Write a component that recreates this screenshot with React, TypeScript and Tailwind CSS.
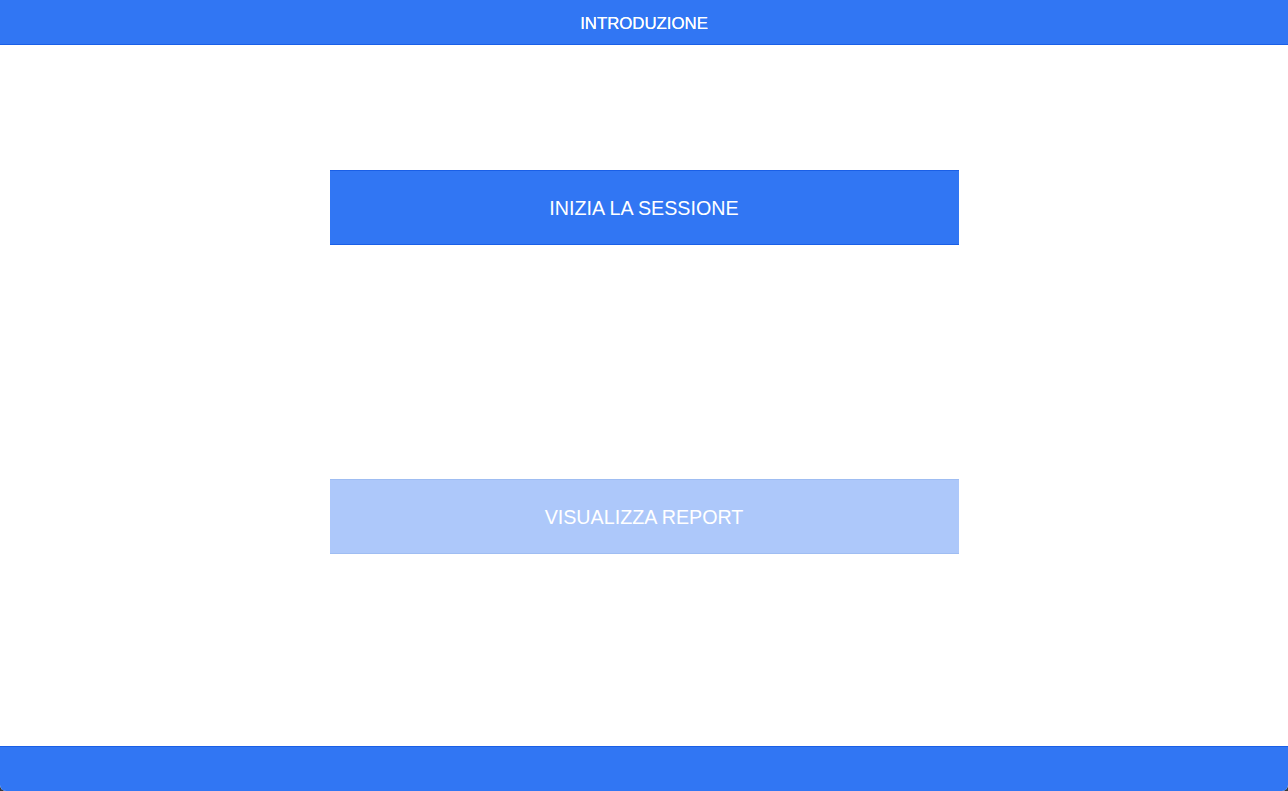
export default function App() {
  return (
    <div className="h-[791px] w-full bg-[#3a3a3a]">
      <div
        className="flex h-full flex-col overflow-hidden rounded-b-[6px] bg-white"
        style={{ fontFamily: '"Liberation Sans", Arial, sans-serif' }}
      >
        <header className="flex h-[45px] shrink-0 items-center justify-center border-b border-[#1a5fe6] bg-[#3176f3] pt-[3px]">
          <h1 className="text-[16.8px] font-medium text-white [text-shadow:0_0_0.4px_#fff]">INTRODUZIONE</h1>
        </header>

        <main className="flex flex-1 flex-col items-center pt-[125px]">
          <button className="flex h-[75px] w-[629px] items-center justify-center border-y border-[#1a5fe6] bg-[#3176f3] pt-[3px] text-[19.7px] text-white">
            INIZIA LA SESSIONE
          </button>
          <button className="mt-[234px] flex h-[75px] w-[629px] items-center justify-center border-y border-[#9fbdf2] bg-[#adc8fa] pt-[3px] text-[19.7px] text-white">
            VISUALIZZA REPORT
          </button>
        </main>

        <footer className="h-[45px] shrink-0 border-t border-[#1a5fe6] bg-[#3176f3]" />
      </div>
    </div>
  );
}
